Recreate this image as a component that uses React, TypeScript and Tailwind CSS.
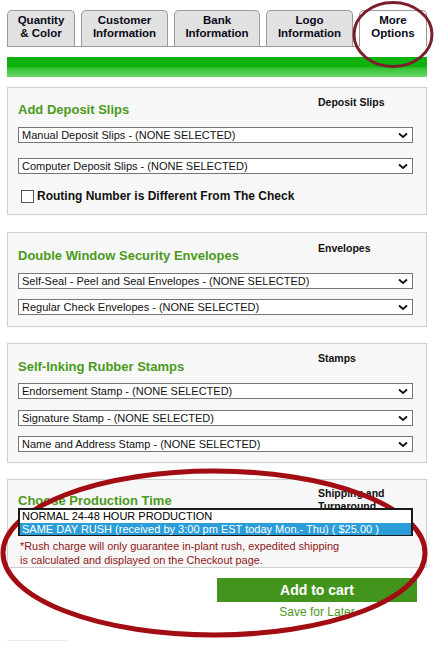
const tabs = [
  { id: 1, line1: "Quantity", line2: "& Color", w: "w-[68px]" },
  { id: 2, line1: "Customer", line2: "Information", w: "w-[87px]" },
  { id: 3, line1: "Bank", line2: "Information", w: "w-[86px]" },
  { id: 4, line1: "Logo", line2: "Information", w: "w-[87px]" },
  { id: 5, line1: "More", line2: "Options", w: "w-[68px]", active: true },
];

const Chevron = () => (
  <svg width="10" height="7" viewBox="0 0 10 7" className="shrink-0">
    <polyline points="1,1.5 5,5 9,1.5" fill="none" stroke="#111" strokeWidth="1.8" />
  </svg>
);

const FakeSelect = ({ label, className = "" }: { label: string; className?: string }) => (
  <div
    className={`flex items-center justify-between h-[16px] border border-[#767676] bg-white pl-[3px] pr-[4px] text-[11px] leading-[14px] text-[#111] ${className}`}
  >
    <span className="whitespace-nowrap">{label}</span>
    <Chevron />
  </div>
);

const Header = ({ title, label, pt, mt }: { title: string; label: string; pt: string; mt: string }) => (
  <div className={`flex items-start ${pt}`}>
    <h2 className={`flex-1 text-[13px] leading-[17px] font-bold text-[#4b9a1c] ${mt}`}>{title}</h2>
    <div className="w-[95px] text-[10.5px] leading-[13px] font-bold text-[#111]">{label}</div>
  </div>
);

export default function App() {
  return (
    <div className="relative w-[435px] min-h-[654px] bg-white font-['Liberation_Sans',Arial,sans-serif]">
      <div className="px-[7px] w-[434px]">
        {/* tabs */}
        <div className="flex gap-[6px] pt-[10px] border-b border-[#9a9a9a]">
          {tabs.map((t) => (
            <div
              key={t.id}
              className={`${t.w} h-[36px] rounded-t-[5px] border border-[#9a9a9a] text-center text-[11.5px] leading-[13px] font-bold text-[#0a0a1a] pt-[3px] ${
                t.active ? "bg-white border-b-white -mb-px h-[37px]" : "bg-[#e1e1e1] border-b-0"
              }`}
            >
              <div>{t.line1}</div>
              <div>{t.line2}</div>
            </div>
          ))}
        </div>

        {/* green bar */}
        <div className="mt-[10px] h-[20px] bg-[linear-gradient(to_bottom,#0db20d_0%,#0db20d_48%,#33c133_55%,#6ad86a_100%)]" />

        {/* deposit slips */}
        <div className="mt-[10px] border border-[#cfcfcf] bg-[#f7f7f7] pl-[10px] pr-[13px] pb-[11px]">
          <Header title="Add Deposit Slips" label="Deposit Slips" pt="pt-[8px]" mt="mt-[5px]" />
          <FakeSelect className="mt-[9px]" label="Manual Deposit Slips - (NONE SELECTED)" />
          <FakeSelect className="mt-[15px]" label="Computer Deposit Slips - (NONE SELECTED)" />
          <label className="mt-[15px] flex items-center gap-[3px] pl-[3px]">
            <span className="w-[13px] h-[13px] border border-[#555] bg-white shrink-0" />
            <span className="text-[12px] leading-[14px] font-bold text-[#111]">
              Routing Number is Different From The Check
            </span>
          </label>
        </div>

        {/* envelopes */}
        <div className="mt-[17px] border border-[#cfcfcf] bg-[#f7f7f7] pl-[10px] pr-[13px] pb-[11px]">
          <Header title="Double Window Security Envelopes" label="Envelopes" pt="pt-[9px]" mt="mt-[5px]" />
          <FakeSelect className="mt-[9px]" label="Self-Seal - Peel and Seal Envelopes - (NONE SELECTED)" />
          <FakeSelect className="mt-[10px]" label="Regular Check Envelopes - (NONE SELECTED)" />
        </div>

        {/* stamps */}
        <div className="mt-[16px] border border-[#cfcfcf] bg-[#f7f7f7] pl-[10px] pr-[13px] pb-[10px]">
          <Header title="Self-Inking Rubber Stamps" label="Stamps" pt="pt-[8px]" mt="mt-[6px]" />
          <FakeSelect className="mt-[8px]" label="Endorsement Stamp - (NONE SELECTED)" />
          <FakeSelect className="mt-[11px]" label="Signature Stamp - (NONE SELECTED)" />
          <FakeSelect className="mt-[10px]" label="Name and Address Stamp - (NONE SELECTED)" />
        </div>

        {/* production time */}
        <div className="mt-[16px] border border-[#cfcfcf] bg-[#f7f7f7] pl-[10px] pr-[13px]">
          <div className="flex items-start pt-[7px] h-[28px]">
            <h2 className="flex-1 mt-[5px] text-[13px] leading-[17px] font-bold text-[#4b9a1c]">
              Choose Production Time
            </h2>
            <div className="w-[95px] text-[10.5px] leading-[13px] font-bold text-[#111]">
              Shipping and
              <br />
              Turnaround
            </div>
          </div>
          <div className="relative z-10 h-[28px] border-2 border-[#1a1a1a] bg-white text-[11px] leading-[12px] text-black">
            <div className="pl-[2px] h-[12px] whitespace-nowrap">NORMAL 24-48 HOUR PRODUCTION</div>
            <div className="pl-[2px] h-[12px] mt-[1px] bg-[#2b9dd8] text-white whitespace-nowrap">
              SAME DAY RUSH (received by 3:00 pm EST today Mon.- Thu) ( $25.00 )
            </div>
          </div>
          <p className="mt-[3px] pl-[2px] text-[10.9px] leading-[14px] text-[#8f1616]">
            *Rush charge will only guarantee in-plant rush, expedited shipping
            <br />
            is calculated and displayed on the Checkout page.
          </p>
        </div>

        {/* actions */}
        <div className="flex flex-col items-end pr-[10px]">
          <button className="mt-[10px] w-[200px] h-[24px] bg-[#43941c] text-white text-[14px] font-bold leading-[24px]">
            Add to cart
          </button>
          <div className="w-[200px] text-center mt-[3px] text-[12px] leading-[14px] text-[#4b9a1c]">
            Save for Later
          </div>
        </div>
        <div className="mt-[21px] w-[61px] h-px bg-[#ececec]" />
      </div>

      {/* annotation circles */}
      <svg className="absolute inset-0 pointer-events-none" width="435" height="654">
        <ellipse cx="393" cy="34.5" rx="39" ry="32" fill="none" stroke="#7b1f2e" strokeWidth="3" />
        <ellipse cx="214" cy="553" rx="211" ry="82" fill="none" stroke="#a10d12" strokeWidth="5" />
      </svg>
    </div>
  );
}
